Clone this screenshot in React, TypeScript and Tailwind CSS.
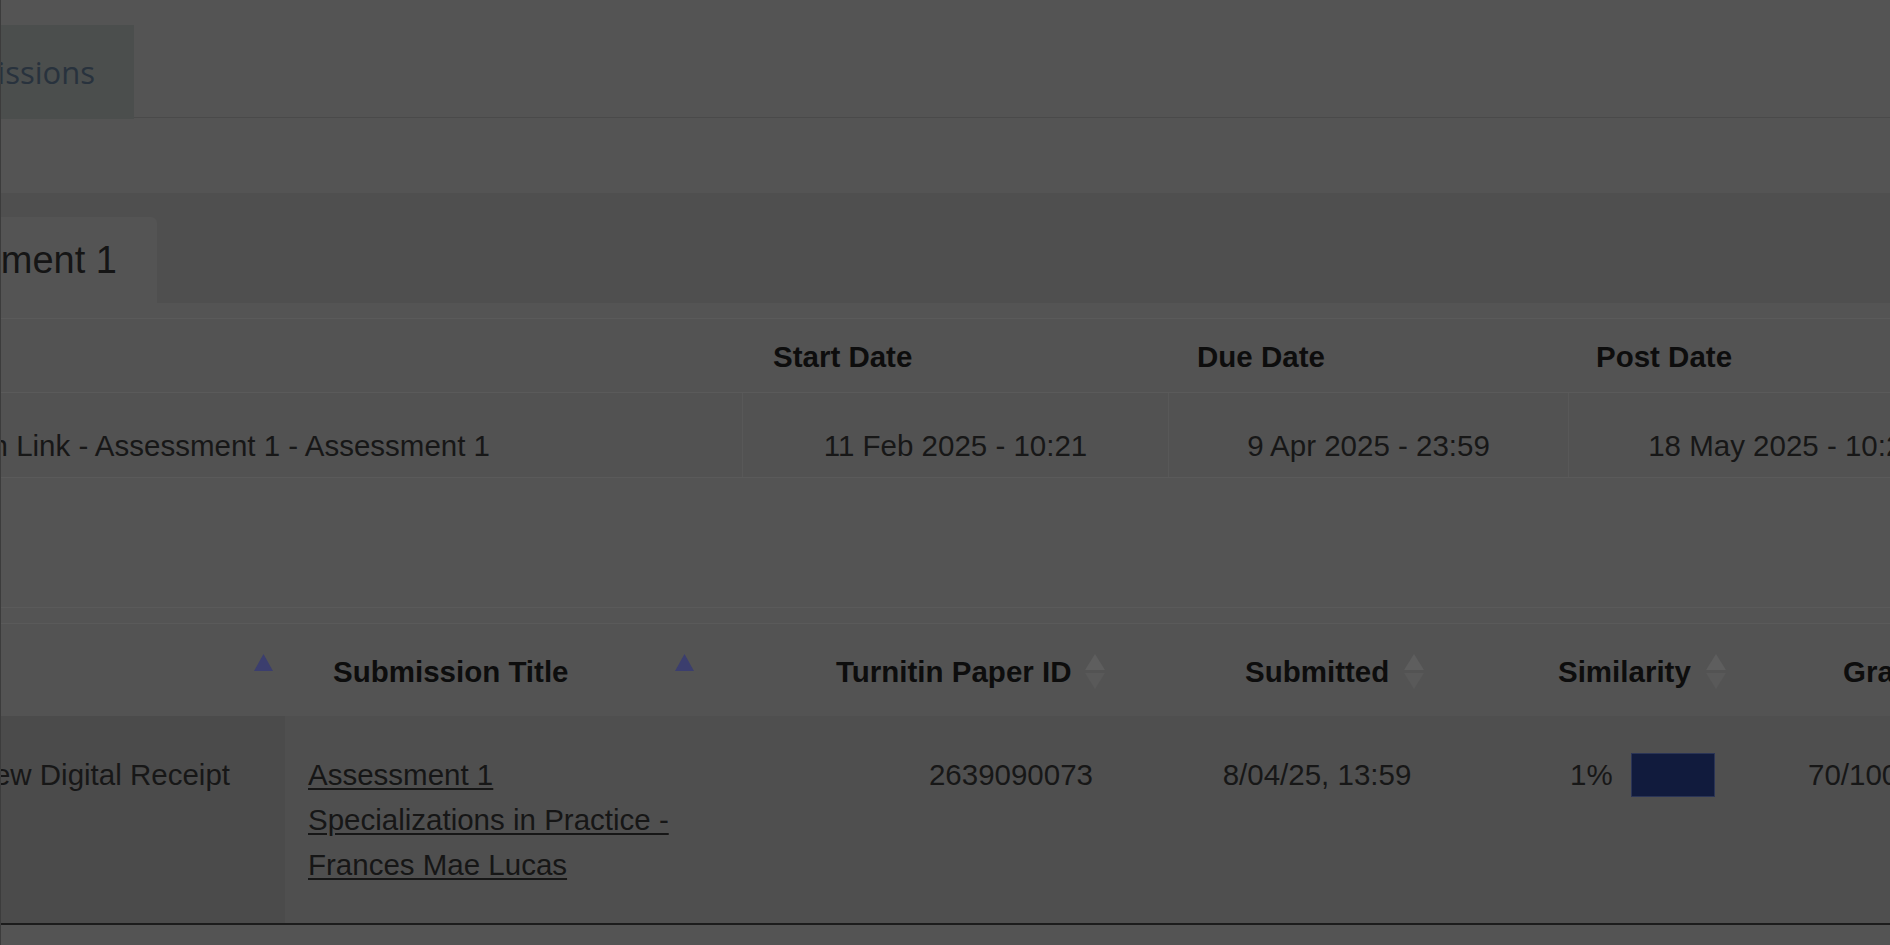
import React from "react";

const SortBoth = () => (
  <svg width="20" height="35" viewBox="0 0 20 35" className="mt-[5px] shrink-0">
    <polygon points="10,0 20,16 0,16" fill="#5e5e5e" />
    <polygon points="0,19 20,19 10,35" fill="#595959" />
  </svg>
);

const SortUp = () => (
  <svg width="19" height="17" viewBox="0 0 19 17" className="mt-[5px] shrink-0">
    <polygon points="9.5,0 19,17 0,17" fill="#3b3e6e" />
  </svg>
);

const App = () => {
  return (
    <div className="w-[1890px] h-[945px] overflow-hidden bg-[#545454] border-l border-[#3c3c3c] font-['Liberation_Sans',Arial,sans-serif] text-[29.5px] leading-[45px] text-[#171717]">
      {/* top nav tabs */}
      <div className="pt-[25px] flex">
        <div className="w-[133px] h-[94px] shrink-0 bg-[#4b4e4d] flex items-center justify-end overflow-hidden whitespace-nowrap pr-[39px] font-['Open_Sans',sans-serif] text-[31px] leading-normal text-[#28323d]">
          Submissions
        </div>
        <div className="flex-1 h-[93px] border-b border-[#4a4a4a]" />
      </div>

      {/* assignment tabs */}
      <div className="mt-[74px] h-[110px] bg-[#4f4f4f] pt-[24px] flex">
        <div className="w-[156px] h-[86px] bg-[#545454] rounded-tr-[6px] flex items-center justify-end overflow-hidden whitespace-nowrap pr-[40px] text-[38px] leading-normal text-[#151515]">
          Assessment 1
        </div>
      </div>

      {/* dates table */}
      <div className="mt-[15px] border-t border-b border-[#5a5a5a]">
        <div className="flex h-[74px] bg-[#535353] border-b border-[#5a5a5a] font-bold text-[#0d0d0d] whitespace-nowrap">
          <div className="w-[741px] shrink-0" />
          <div className="w-[426px] shrink-0 pl-[31px] pt-[15px]">Start Date</div>
          <div className="w-[400px] shrink-0 pl-[29px] pt-[15px]">Due Date</div>
          <div className="w-[430px] shrink-0 pl-[28px] pt-[15px]">Post Date</div>
        </div>
        <div className="flex h-[84px] bg-[#525252] whitespace-nowrap">
          <div className="w-[741px] shrink-0 flex justify-end overflow-hidden pr-[252px] pt-[30px]">
            Turnitin Submission Link - Assessment 1 - Assessment 1
          </div>
          <div className="w-[426px] shrink-0 border-l border-[#585858] text-center pt-[30px]">11 Feb 2025 - 10:21</div>
          <div className="w-[400px] shrink-0 border-l border-[#585858] text-center pt-[30px]">9 Apr 2025 - 23:59</div>
          <div className="w-[430px] shrink-0 border-l border-[#585858] text-center pt-[30px]">18 May 2025 - 10:21</div>
        </div>
      </div>

      {/* submissions table */}
      <div className="mt-[129px] border-t border-[#5a5a5a]">
        <div className="h-[16px] border-b border-[#5a5a5a]" />
        <div className="flex h-[92px] bg-[#535353] font-bold text-[#0d0d0d] whitespace-nowrap">
          <div className="w-[284px] shrink-0 flex items-start justify-end pr-[12px] pt-[25px]">
            <SortUp />
          </div>
          <div className="w-[421px] shrink-0 flex items-start pl-[48px] pr-[12px] pt-[25px]">
            <span>Submission Title</span>
            <span className="ml-auto flex">
              <SortUp />
            </span>
          </div>
          <div className="w-[411px] shrink-0 flex items-start pl-[130px] pt-[25px] gap-[14px]">
            <span>Turnitin Paper ID</span>
            <SortBoth />
          </div>
          <div className="w-[400px] shrink-0 flex items-start pl-[128px] pt-[25px] gap-[15px]">
            <span>Submitted</span>
            <SortBoth />
          </div>
          <div className="w-[273px] shrink-0 flex items-start pl-[41px] pt-[25px] gap-[15px]">
            <span>Similarity</span>
            <SortBoth />
          </div>
          <div className="w-[300px] shrink-0 flex items-start pl-[53px] pt-[25px]">
            <span>Grade</span>
          </div>
        </div>
        <div className="flex h-[209px] bg-[#4f4f4f] border-b-2 border-[#1c1c1c]">
          <div className="w-[284px] shrink-0 bg-[#4b4b4b] flex justify-end overflow-hidden whitespace-nowrap pr-[55px] pt-[36px]">
            View Digital Receipt
          </div>
          <div className="w-[421px] shrink-0 pl-[23px] pr-[20px] pt-[36px]">
            <a className="underline underline-offset-[3px] text-[#161616]">
              Assessment 1 Specializations in Practice - Frances Mae Lucas
            </a>
          </div>
          <div className="w-[411px] shrink-0 text-right pr-[24px] pt-[36px]">2639090073</div>
          <div className="w-[400px] shrink-0 text-center pt-[36px] whitespace-nowrap">8/04/25, 13:59</div>
          <div className="w-[273px] shrink-0 flex items-start pl-[53px] pt-[36px] whitespace-nowrap">
            <span>1%</span>
            <span className="ml-[18px] mt-px w-[84px] h-[44px] bg-[#111b3d] border border-[#2a3456]" />
          </div>
          <div className="w-[300px] shrink-0 pl-[18px] pt-[36px] whitespace-nowrap">70/100</div>
        </div>
      </div>
    </div>
  );
};

export default App;
